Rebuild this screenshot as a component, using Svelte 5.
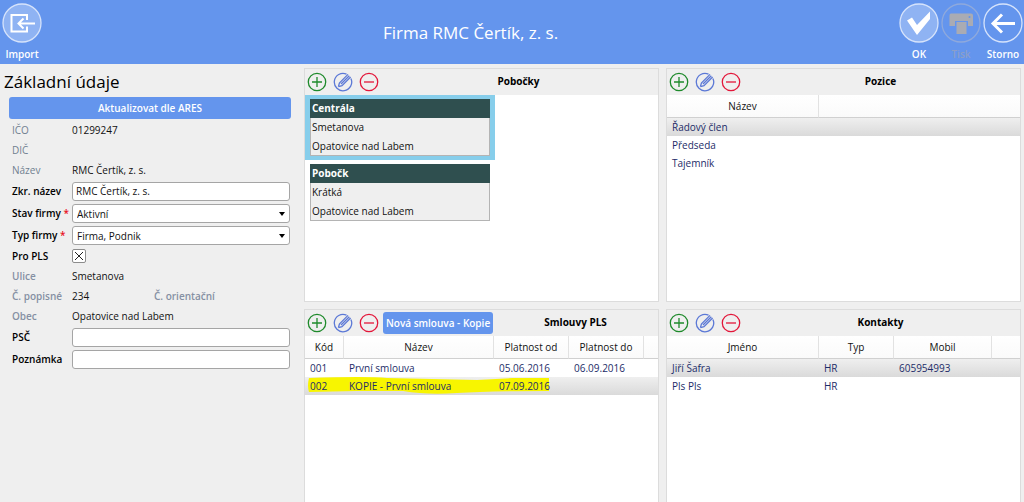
<script lang="ts">
  interface Column {
    label: string;
    width?: number;
  }

  interface Grid {
    title: string;
    columns: Column[];
    rows: string[][];
    selected: number;
    marked?: boolean;
    copyLabel?: string;
  }

  const contracts: Grid = {
    title: 'Smlouvy PLS',
    columns: [
      { label: 'Kód', width: 39 },
      { label: 'Název', width: 150 },
      { label: 'Platnost od', width: 75 },
      { label: 'Platnost do', width: 75 },
      { label: '' }
    ],
    rows: [
      ['001', 'První smlouva', '05.06.2016', '06.09.2016', ''],
      ['002', 'KOPIE - První smlouva', '07.09.2016', '', '']
    ],
    selected: 1,
    marked: true,
    copyLabel: 'Nová smlouva - Kopie'
  };

  const positions: Grid = {
    title: 'Pozice',
    columns: [{ label: 'Název', width: 152 }, { label: '' }],
    rows: [
      ['Řadový člen', ''],
      ['Předseda', ''],
      ['Tajemník', '']
    ],
    selected: 0
  };

  const contacts: Grid = {
    title: 'Kontakty',
    columns: [
      { label: 'Jméno', width: 152 },
      { label: 'Typ', width: 75 },
      { label: 'Mobil', width: 98 },
      { label: '' }
    ],
    rows: [
      ['Jiří Šafra', 'HR', '605954993', ''],
      ['Pls Pls', 'HR', '', '']
    ],
    selected: 0
  };

  const branches = [
    { name: 'Centrála', street: 'Smetanova', city: 'Opatovice nad Labem' },
    { name: 'Pobočk', street: 'Krátká', city: 'Opatovice nad Labem' }
  ];

  let selectedBranch = $state(0);
  let shortName = $state('RMC Čertík, z. s.');
  let status = $state('Aktivní');
  let kind = $state('Firma, Podnik');
  let forPls = $state(true);
  let zip = $state('');
  let note = $state('');
</script>

{#snippet tools(title: string, copyLabel?: string)}
  <div class="bar">
    <div class="tools">
      <button type="button" class="tool add" aria-label="Přidat">
        <svg viewBox="0 0 20 20"><circle cx="10" cy="10" r="8.7" /><path d="M10 5v10M5 10h10" /></svg>
      </button>
      <button type="button" class="tool edit" aria-label="Upravit">
        <svg viewBox="0 0 20 20">
          <path d="M13.5 2.1A8.7 8.7 0 1 0 17.9 6.4" />
          <path d="M5.4 14.6l1-3.6L15 2.4M5.4 14.6l3.6-1L17.6 5M8 12L16.3 3.7" />
        </svg>
      </button>
      <button type="button" class="tool remove" aria-label="Odebrat">
        <svg viewBox="0 0 20 20"><circle cx="10" cy="10" r="8.7" /><path d="M5 10h10" /></svg>
      </button>
    </div>
    {#if copyLabel}
      <button type="button" class="action copy">{copyLabel}</button>
    {/if}
    <h2>{title}</h2>
  </div>
{/snippet}

{#snippet gridPanel(grid: Grid)}
  <section class="panel">
    {@render tools(grid.title, grid.copyLabel)}
    <table aria-label={grid.title}>
      <colgroup>
        {#each grid.columns as col}
          <col style:width={col.width ? `${col.width}px` : 'auto'} />
        {/each}
      </colgroup>
      <thead>
        <tr>
          {#each grid.columns as col}
            <th scope="col">{col.label}</th>
          {/each}
        </tr>
      </thead>
      <tbody>
        {#each grid.rows as row, i}
          <tr class:selected={i === grid.selected}>
            {#each row as cell, j}
              <td>
                {#if grid.marked && i === grid.selected && j === 0}
                  <svg class="marker" viewBox="0 0 244 18" aria-hidden="true">
                    <path d="M2 1Q60-1 80 1L170 3 206 1 242 1V14Q180 14 150 16T96 14L50 14 2 15Q0 9 2 1Z" />
                  </svg>
                {/if}
                {cell}
              </td>
            {/each}
          </tr>
        {/each}
      </tbody>
    </table>
  </section>
{/snippet}

<div class="window">
  <header>
    <button type="button" class="command">
      <svg viewBox="0 0 40 40">
        <circle class="ring filled" cx="20" cy="20" r="19" />
        <path class="thin" d="M25 17v-5H9.5v16.5H25v-5M33 20.5H17M21.5 15.5l-5 5 5 5" />
      </svg>
      <span>Import</span>
    </button>
    <h1>Firma RMC Čertík, z. s.</h1>
    <div class="commands">
      <button type="button" class="command">
        <svg viewBox="0 0 40 40">
          <circle class="ring filled" cx="20" cy="20" r="19" />
          <path class="solid" d="M8 17.5l5-3 5 7.5L31 8.5v7.5L18 32z" />
        </svg>
        <span>OK</span>
      </button>
      <button type="button" class="command" disabled>
        <svg viewBox="0 0 40 40">
          <circle class="ring" cx="20" cy="20" r="19" />
          <path class="solid" d="M10 10.5h20q2 0 2 2V23h-5v-5H14v5H8.5v-10.5q0-2 1.5-2z" />
          <rect class="solid" x="15.5" y="19" width="10" height="12" />
          <circle class="lamp" cx="28.5" cy="14" r="1" />
        </svg>
        <span>Tisk</span>
      </button>
      <button type="button" class="command">
        <svg viewBox="0 0 40 40">
          <circle class="ring" cx="20" cy="20" r="19" />
          <path class="thick" d="M32 20.5H10M19 11.500l-9 9 9 9" />
        </svg>
        <span>Storno</span>
      </button>
    </div>
  </header>

  <main>
    <form onsubmit={(e) => e.preventDefault()}>
      <h2 class="heading">Základní údaje</h2>
      <button type="button" class="action update">Aktualizovat dle ARES</button>

      <div class="row"><span class="name">IČO</span><output>01299247</output></div>
      <div class="row"><span class="name">DIČ</span></div>
      <div class="row"><span class="name">Název</span><output>RMC Čertík, z. s.</output></div>
      <div class="row field">
        <label for="short-name">Zkr. název</label>
        <input id="short-name" type="text" bind:value={shortName} />
      </div>
      <div class="row field">
        <label for="status">Stav firmy <em>*</em></label>
        <div class="select">
          <select id="status" bind:value={status}>
            <option>Aktivní</option>
            <option>Neaktivní</option>
          </select>
          <svg viewBox="0 0 6 4" aria-hidden="true"><path d="M0 0h6L3 4z" /></svg>
        </div>
      </div>
      <div class="row field">
        <label for="kind">Typ firmy <em>*</em></label>
        <div class="select">
          <select id="kind" bind:value={kind}>
            <option>Firma, Podnik</option>
            <option>Spolek</option>
          </select>
          <svg viewBox="0 0 6 4" aria-hidden="true"><path d="M0 0h6L3 4z" /></svg>
        </div>
      </div>
      <div class="row">
        <label for="for-pls">Pro PLS</label>
        <div class="check">
          <input id="for-pls" type="checkbox" bind:checked={forPls} />
          {#if forPls}
            <svg viewBox="0 0 14 14" aria-hidden="true"><path d="M3 3l8 8M11 3l-8 8" /></svg>
          {/if}
        </div>
      </div>
      <div class="row"><span class="name strong">Ulice</span><output>Smetanova</output></div>
      <div class="row pair">
        <span class="name strong">Č. popisné</span><output>234</output>
        <span class="name strong">Č. orientační</span>
      </div>
      <div class="row"><span class="name strong">Obec</span><output>Opatovice nad Labem</output></div>
      <div class="row field">
        <label for="zip">PSČ</label>
        <input id="zip" type="text" bind:value={zip} />
      </div>
      <div class="row field">
        <label for="note">Poznámka</label>
        <input id="note" type="text" bind:value={note} />
      </div>
    </form>

    <div class="panels">
      <section class="panel">
        {@render tools('Pobočky')}
        <div class="branches">
          {#each branches as branch, i}
            <button
              type="button"
              class="branch"
              class:active={i === selectedBranch}
              onclick={() => (selectedBranch = i)}
            >
              <span class="card">
                <strong>{branch.name}</strong>
                <span>{branch.street}</span>
                <span>{branch.city}</span>
              </span>
            </button>
          {/each}
        </div>
      </section>
      {@render gridPanel(positions)}
      {@render gridPanel(contracts)}
      {@render gridPanel(contacts)}
    </div>
  </main>
</div>

<style>
  :global(body) {
    background: #efefef;
  }

  .window {
    display: flex;
    flex-direction: column;
    height: 100vh;
    overflow: hidden;
    font: 10px/18px 'Open Sans', 'Noto Sans', sans-serif;
    color: #111;
  }

  button,
  input,
  select {
    margin: 0;
    padding: 0;
    border: 0;
    font: inherit;
    color: inherit;
    box-sizing: border-box;
  }

  button {
    background: none;
  }

  h1,
  h2 {
    margin: 0;
  }

  svg {
    display: block;
    fill: none;
  }

  header {
    display: flex;
    flex: none;
    height: 64px;
    background: #6495ed;
    color: #fff;
    padding-left: 1px;
  }

  h1 {
    flex: 1;
    font-size: 17px;
    font-weight: 400;
    line-height: 66px;
    text-align: center;
  }

  .commands {
    display: flex;
  }

  .command {
    display: flex;
    flex-direction: column;
    align-items: center;
    width: 42px;
    padding-top: 3px;
    font-weight: 600;
    line-height: 22px;
    white-space: nowrap;
  }

  .command svg {
    flex: none;
    width: 40px;
    height: 40px;
    stroke: #fff;
  }

  .ring {
    stroke: #d6e3fb;
    stroke-width: 1.3;
  }

  .filled {
    fill: #8fb3f3;
  }

  .thin {
    stroke-width: 2;
  }

  .thick {
    stroke-width: 3;
  }

  .solid {
    fill: #fff;
    stroke: none;
  }

  .command:disabled {
    color: #8b9fc9;
  }

  .command:disabled .ring {
    stroke: #8fa9dc;
  }

  .command:disabled .solid {
    fill: #a9abb3;
  }

  .lamp {
    fill: #6495ed;
    stroke: none;
  }

  main {
    display: flex;
    flex: 1;
    min-height: 0;
  }

  form {
    flex: none;
    width: 304px;
    box-sizing: border-box;
    padding: 3px 14px 0 12px;
  }

  .heading {
    margin-left: -8px;
    font-size: 17px;
    font-weight: 400;
    line-height: 30px;
    color: #000;
  }

  .action {
    height: 22px;
    border-radius: 3px;
    background: #6495ed;
    color: #fff;
    font-weight: 600;
    line-height: 22px;
    white-space: nowrap;
  }

  .update {
    display: block;
    width: calc(100% + 4px);
    margin: 0 -2px 1px -3px;
  }

  .row {
    display: grid;
    grid-template-columns: 60px 1fr;
    align-items: center;
    height: 20px;
  }

  .pair {
    grid-template-columns: 60px 82px 1fr;
  }

  .field {
    height: 22px;
  }

  label {
    font-weight: 600;
    color: #000;
    white-space: nowrap;
  }

  .name {
    color: #708090;
    white-space: nowrap;
  }

  .strong {
    font-weight: 600;
    color: #8590a3;
  }

  em {
    color: #e81123;
    font-style: normal;
  }

  input[type='text'],
  select {
    width: 100%;
    height: 19px;
    padding: 0 3px;
    border: 1px solid #a5a5a5;
    border-radius: 3px;
    background: #fff;
  }

  .select {
    position: relative;
  }

  select {
    display: block;
    padding: 0 4px;
    appearance: none;
  }

  .select svg {
    position: absolute;
    top: 8px;
    right: 5px;
    width: 6px;
    height: 4px;
    fill: #000;
    pointer-events: none;
  }

  .check {
    display: grid;
    width: 14px;
    height: 14px;
  }

  .check > * {
    grid-area: 1 / 1;
    width: 14px;
    height: 14px;
  }

  .check input {
    appearance: none;
    border: 1px solid #8c8c8c;
    border-radius: 2px;
    background: #fff;
  }

  .check svg {
    z-index: 1;
    stroke: #222;
    pointer-events: none;
  }

  .panels {
    display: grid;
    flex: 1;
    grid-template-columns: 1fr 1fr;
    grid-template-rows: 234px 1fr;
    gap: 7px;
    min-width: 0;
    padding: 4px 3px 0 0;
  }

  .panel {
    min-width: 0;
    border: 1px solid #dcdcdc;
    background: #fff;
  }

  .panel:nth-child(n + 3) {
    border-bottom: 0;
  }

  .bar {
    display: flex;
    align-items: center;
    height: 26px;
    box-sizing: border-box;
    padding: 0 0 1px 2px;
    background: #efefef;
  }

  .tools {
    display: flex;
    gap: 6px;
  }

  .tool,
  .tool svg {
    width: 20px;
    height: 20px;
  }

  .tool svg {
    stroke: currentColor;
    stroke-width: 1.3;
  }

  .add {
    color: #1e8a2b;
  }

  .edit {
    color: #5b78d6;
  }

  .remove {
    color: #e3173a;
  }

  .copy {
    margin-left: 4px;
    padding: 0 3px;
  }

  .bar h2 {
    flex: 1;
    padding-bottom: 2px;
    font-size: 10px;
    font-weight: 700;
    color: #000;
    text-align: center;
  }

  .branches {
    display: flex;
    flex-direction: column;
    align-items: flex-start;
  }

  .branch {
    padding: 4px 5px;
    text-align: left;
  }

  .active {
    background: #87ceeb;
  }

  .card {
    display: grid;
    grid-template-rows: 19px 19px 19px;
    width: 180px;
    box-sizing: border-box;
    background: #efefef;
    box-shadow: inset 0 0 0 1px #b4b4b4;
  }

  .card > * {
    padding: 0 2px;
    line-height: 19px;
  }

  .card strong {
    background: #2f4f4f;
    color: #fff;
  }

  table {
    width: 100%;
    table-layout: fixed;
    border-collapse: separate;
    border-spacing: 0;
    color: #1c2c68;
  }

  th {
    height: 22px;
    padding: 0;
    border-right: 1px solid #e2e2e2;
    border-bottom: 1px solid #d0d0d0;
    background: linear-gradient(#fff, #fafafa);
    color: #111;
    font-weight: 400;
  }

  th:last-child {
    border-right: 0;
  }

  td {
    height: 18px;
    padding: 0 0 0 5px;
    line-height: 18px;
    white-space: nowrap;
  }

  .selected {
    position: relative;
    z-index: 0;
    background: linear-gradient(#efefef, #dadada);
  }

  .marker {
    position: absolute;
    z-index: -1;
    top: 0;
    left: 2px;
    width: 244px;
    height: 18px;
    fill: #f8f500;
    pointer-events: none;
  }
</style>
